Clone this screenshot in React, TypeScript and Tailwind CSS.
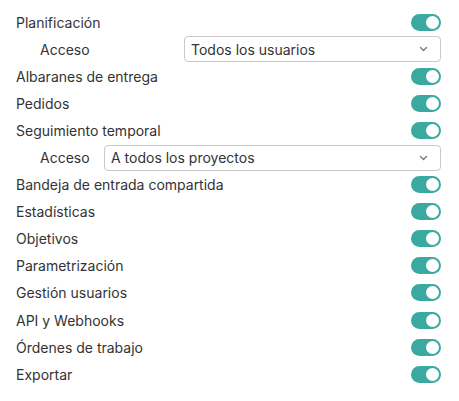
import React from "react";

function Toggle() {
  return (
    <div className="w-[30px] h-[17px] rounded-full bg-[#3aa9a0] flex items-center justify-end pr-[2px] shrink-0">
      <div className="w-[13px] h-[13px] rounded-full bg-white" />
    </div>
  );
}

function Chevron() {
  return (
    <svg width="9" height="6" viewBox="0 0 9 6" fill="none">
      <path d="M1.5 1.5 L4.5 4.5 L7.5 1.5" stroke="#7a7a80" strokeWidth="1.4" strokeLinecap="round" strokeLinejoin="round" />
    </svg>
  );
}

function ToggleRow({ label }: { label: string }) {
  return (
    <div className="h-[27.1px] flex items-center justify-between">
      <span>{label}</span>
      <Toggle />
    </div>
  );
}

function SelectRow({ value, width }: { value: string; width: string }) {
  return (
    <div className="h-[27.1px] flex items-center justify-between pl-6">
      <span>Acceso</span>
      <div className={`${width} h-[26px] border border-[#c9c9c9] rounded-[4px] flex items-center justify-between pl-[6px] pr-[12px] bg-white`}>
        <span>{value}</span>
        <Chevron />
      </div>
    </div>
  );
}

export default function App() {
  return (
    <div
      className="w-[459px] h-[401px] bg-white pl-4 pr-[18px] pt-[8.5px] text-[14px] text-[#333333]"
      style={{ fontFamily: "Inter, 'Noto Sans', sans-serif" }}
    >
      <ToggleRow label="Planificación" />
      <SelectRow value="Todos los usuarios" width="w-[257px]" />
      <ToggleRow label="Albaranes de entrega" />
      <ToggleRow label="Pedidos" />
      <ToggleRow label="Seguimiento temporal" />
      <SelectRow value="A todos los proyectos" width="w-[337px]" />
      <ToggleRow label="Bandeja de entrada compartida" />
      <ToggleRow label="Estadísticas" />
      <ToggleRow label="Objetivos" />
      <ToggleRow label="Parametrización" />
      <ToggleRow label="Gestión usuarios" />
      <ToggleRow label="API y Webhooks" />
      <ToggleRow label="Órdenes de trabajo" />
      <ToggleRow label="Exportar" />
    </div>
  );
}
